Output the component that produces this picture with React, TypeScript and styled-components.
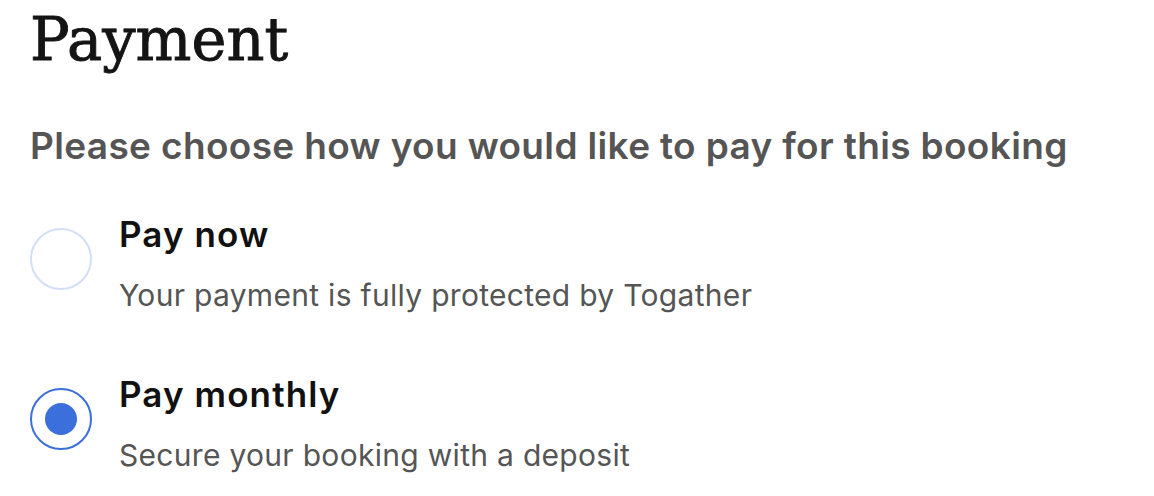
import React, { useState } from "react";
import styled, { createGlobalStyle } from "styled-components";

const GlobalStyle = createGlobalStyle`
    body {
        margin: 0;
        background: #ffffff;
        font-family: Inter, "Noto Sans", sans-serif;
    }
`;

const Page = styled.div`
    padding: 5px 30px 0 30px;
`;

const Title = styled.h1`
    margin: 0;
    font-family: "DejaVu Serif", "Liberation Serif", serif;
    font-weight: 400;
    font-size: 59px;
    line-height: 70px;
    color: #141414;
    -webkit-text-stroke: 0.9px #141414;
`;

const Subtitle = styled.p`
    margin: 47px 0 0 0;
    font-size: 37px;
    font-weight: 600;
    line-height: 48px;
    letter-spacing: 0.35px;
    color: #555555;
`;

const Options = styled.div`
    display: flex;
    flex-direction: column;
    gap: 57px;
    margin-top: 41px;
`;

const Option = styled.label`
    display: flex;
    align-items: flex-start;
    gap: 27px;
    cursor: pointer;
`;

const Radio = styled.span<{ $checked: boolean }>`
    flex: none;
    margin-top: 17px;
    width: 62px;
    height: 62px;
    box-sizing: border-box;
    border-radius: 50%;
    border: 2px solid ${(p) => (p.$checked ? "#3b6fdc" : "#d3dff6")};
    display: flex;
    align-items: center;
    justify-content: center;

    &::after {
        content: "";
        width: 32px;
        height: 32px;
        border-radius: 50%;
        background: #3b6fdc;
        display: ${(p) => (p.$checked ? "block" : "none")};
    }
`;

const OptionText = styled.div`
    display: flex;
    flex-direction: column;
`;

const OptionTitle = styled.span`
    font-size: 35px;
    font-weight: 600;
    line-height: 46px;
    letter-spacing: 1.1px;
    color: #111111;
`;

const OptionDesc = styled.span`
    margin-top: 19px;
    font-size: 30px;
    font-weight: 400;
    line-height: 38px;
    letter-spacing: 0.3px;
    color: #555555;
`;

const options = [
    { id: "now", title: "Pay now", desc: "Your payment is fully protected by Togather" },
    { id: "monthly", title: "Pay monthly", desc: "Secure your booking with a deposit" },
];

const App: React.FC = () => {
    const [selected, setSelected] = useState("monthly");

    return (
        <>
            <GlobalStyle />
            <Page>
                <Title>Payment</Title>
                <Subtitle>Please choose how you would like to pay for this booking</Subtitle>
                <Options>
                    {options.map((o) => (
                        <Option key={o.id} onClick={() => setSelected(o.id)}>
                            <Radio $checked={selected === o.id} />
                            <OptionText>
                                <OptionTitle>{o.title}</OptionTitle>
                                <OptionDesc>{o.desc}</OptionDesc>
                            </OptionText>
                        </Option>
                    ))}
                </Options>
            </Page>
        </>
    );
};

export default App;
